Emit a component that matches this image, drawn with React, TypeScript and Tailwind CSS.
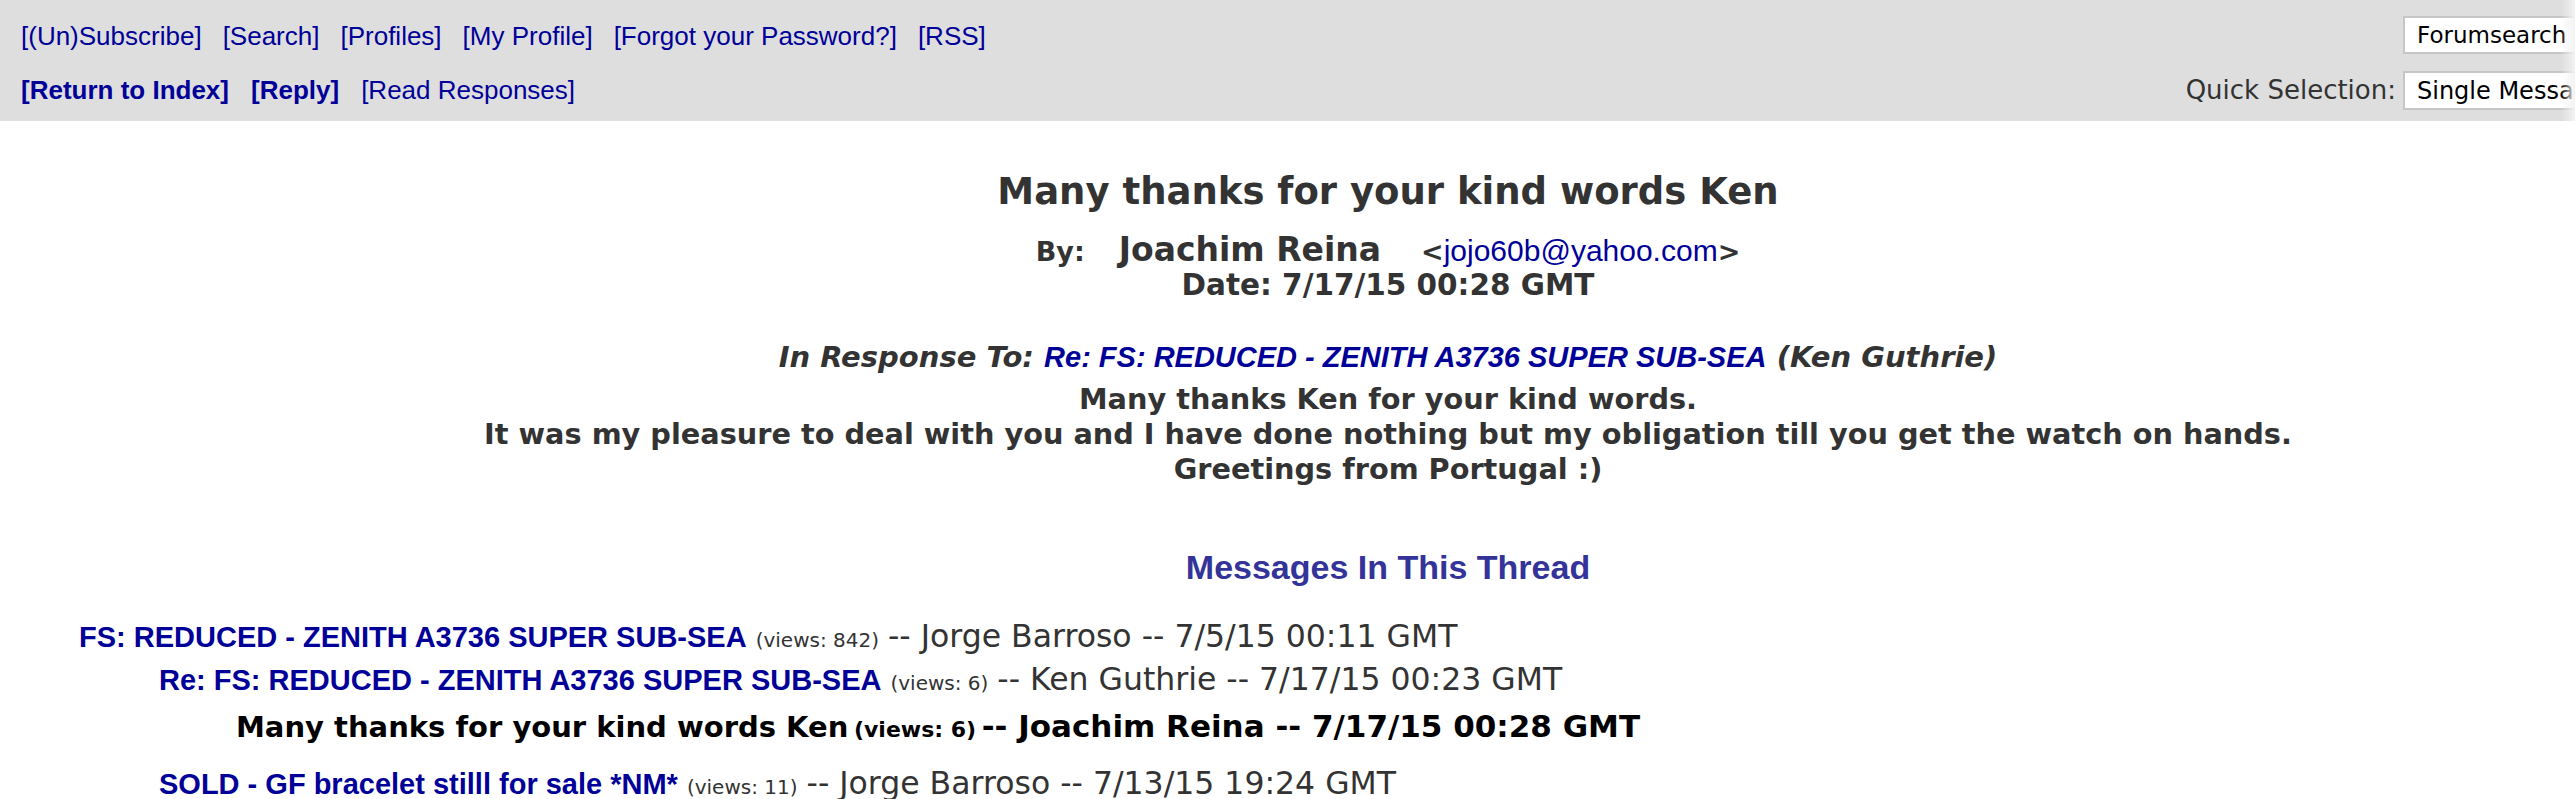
import React from "react";

const verdana = "font-['DejaVu_Sans',Verdana,sans-serif]";
const arial = "font-['Liberation_Sans',Arial,sans-serif]";

function ThreadRow({
  indent,
  link,
  views,
  rest,
  current,
  extra,
}: {
  indent: string;
  link: string;
  views: string;
  rest: string;
  current?: boolean;
  extra?: string;
}) {
  if (current) {
    return (
      <div className={`${indent} ${extra ?? ""} whitespace-nowrap leading-[38px] text-black font-bold ${verdana}`}>
        <span className="text-[29px]">{link}</span>{" "}
        <span className="text-[22px]">{views}</span>{" "}
        <span className="text-[31px]">{rest}</span>
      </div>
    );
  }
  return (
    <div className={`${indent} ${extra ?? ""} whitespace-nowrap leading-[38px] text-[#333]`}>
      <a className={`${arial} font-bold text-[29px] text-[#000099]`}>{link}</a>
      <span className={`${verdana} text-[20px] ml-[9px]`}>{views}</span>
      <span className={`${verdana} text-[31.5px] ml-[9px]`}>{rest}</span>
    </div>
  );
}

export default function App() {
  return (
    <div className="relative w-[2575px] h-[799px] overflow-hidden bg-white">
      <div className="w-[2776px]">
        <header className="h-[121px] bg-[#dedede] flex justify-between">
          <div className={`pl-[21px] pt-[21px] flex flex-col gap-[24px] ${arial} text-[26px] leading-[30px] text-[#000099]`}>
            <div className="flex gap-[21px] whitespace-nowrap">
              <a>[(Un)Subscribe]</a>
              <a>[Search]</a>
              <a>[Profiles]</a>
              <a>[My Profile]</a>
              <a>[Forgot your Password?]</a>
              <a>[RSS]</a>
            </div>
            <div className="flex gap-[22px] whitespace-nowrap">
              <a className="font-bold">[Return to Index]</a>
              <a className="font-bold">[Reply]</a>
              <a>[Read Responses]</a>
            </div>
          </div>
          <div className={`pr-[13px] pt-[16px] flex flex-col items-end gap-[17px] ${verdana}`}>
            <div className="w-[360px] h-[38px] bg-white border-2 border-[#c6c6c6] pl-[12px] flex items-center text-[23px] text-black whitespace-nowrap">
              Forumsearch
            </div>
            <div className="flex items-center gap-[7px] whitespace-nowrap">
              <span className="text-[26px] text-[#333]">Quick Selection:</span>
              <div className="w-[360px] h-[39px] bg-white border-2 border-[#c6c6c6] pl-[12px] flex items-center text-[24px] text-black">
                Single Message View
              </div>
            </div>
          </div>
        </header>

        <main className={`flex flex-col items-center text-[#333] font-bold ${verdana}`}>
          <h1 className="mt-[49px] text-[37px] leading-[44px] whitespace-nowrap">
            Many thanks for your kind words Ken
          </h1>
          <div className="mt-[20px] flex items-baseline leading-[32px] whitespace-nowrap">
            <span className="text-[27px]">By:</span>
            <span className="ml-[34px] text-[33px]">Joachim Reina</span>
            <span className="ml-[40px] text-[27px]">
              &lt;
              <a className={`${arial} font-normal text-[30px] text-[#000099]`}>jojo60b@yahoo.com</a>
              &gt;
            </span>
          </div>
          <div className="text-[29.5px] leading-[34px] whitespace-nowrap">Date: 7/17/15 00:28 GMT</div>
          <div className="mt-[37px] italic text-[29px] leading-[36px] whitespace-nowrap">
            In Response To:{" "}
            <a className={`${arial} text-[#000099]`}>Re: FS: REDUCED - ZENITH A3736 SUPER SUB-SEA</a>{" "}
            (Ken Guthrie)
          </div>
          <div className="mt-[7px] text-[28.75px] leading-[35px] text-center whitespace-nowrap">
            <p>Many thanks Ken for your kind words.</p>
            <p>It was my pleasure to deal with you and I have done nothing but my obligation till you get the watch on hands.</p>
            <p>Greetings from Portugal :)</p>
          </div>
          <h2 className={`mt-[60px] ${arial} text-[34px] leading-[40px] text-[#333399] whitespace-nowrap`}>
            Messages In This Thread
          </h2>
        </main>

        <section className="mt-[30px]">
          <ThreadRow
            indent="pl-[79px]"
            link="FS: REDUCED - ZENITH A3736 SUPER SUB-SEA"
            views="(views: 842)"
            rest="-- Jorge Barroso -- 7/5/15 00:11 GMT"
          />
          <ThreadRow
            indent="pl-[159px]"
            link="Re: FS: REDUCED - ZENITH A3736 SUPER SUB-SEA"
            views="(views: 6)"
            rest="-- Ken Guthrie -- 7/17/15 00:23 GMT"
          />
          <ThreadRow
            indent="pl-[236px]"
            extra="mt-[4px]"
            current
            link="Many thanks for your kind words Ken"
            views="(views: 6)"
            rest="-- Joachim Reina -- 7/17/15 00:28 GMT"
          />
          <ThreadRow
            indent="pl-[159px]"
            extra="mt-[13px]"
            link="SOLD - GF bracelet stilll for sale *NM*"
            views="(views: 11)"
            rest="-- Jorge Barroso -- 7/13/15 19:24 GMT"
          />
        </section>
      </div>
      <div className="absolute top-0 right-0 w-[14px] h-[121px] bg-linear-to-r from-transparent to-[#f2f2f2]"></div>
    </div>
  );
}
